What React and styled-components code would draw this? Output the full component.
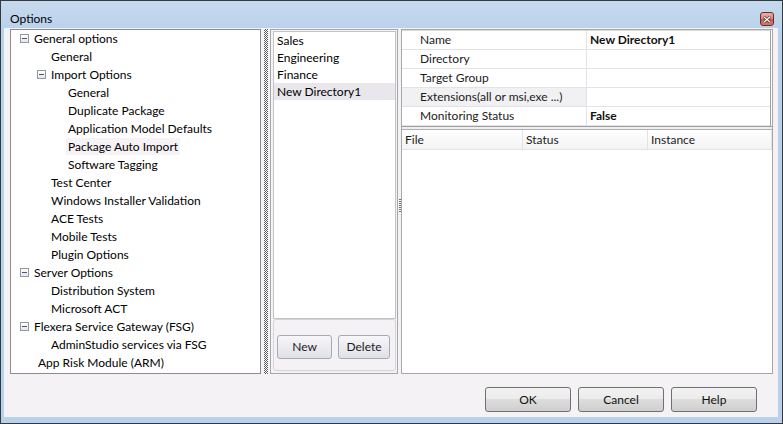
import React from 'react';
import styled, { createGlobalStyle } from 'styled-components';

const GlobalStyle = createGlobalStyle`
  body {
    margin: 0;
    font-family: Lato, "Open Sans", sans-serif;
    font-size: 12px;
    color: #1b1b1b;
  }
  * { box-sizing: border-box; }
`;

const tree = [
  { label: 'General options', indent: 20, open: true },
  { label: 'General', indent: 51 },
  { label: 'Import Options', indent: 37, open: true },
  { label: 'General', indent: 68 },
  { label: 'Duplicate Package', indent: 68 },
  { label: 'Application Model Defaults', indent: 68 },
  { label: 'Package Auto Import', indent: 68, hover: true },
  { label: 'Software Tagging', indent: 68 },
  { label: 'Test Center', indent: 51 },
  { label: 'Windows Installer Validation', indent: 51 },
  { label: 'ACE Tests', indent: 51 },
  { label: 'Mobile Tests', indent: 51 },
  { label: 'Plugin Options', indent: 51 },
  { label: 'Server Options', indent: 20, open: true },
  { label: 'Distribution System', indent: 51 },
  { label: 'Microsoft ACT', indent: 51 },
  { label: 'Flexera Service Gateway (FSG)', indent: 20, open: true },
  { label: 'AdminStudio services via FSG', indent: 51 },
  { label: 'App Risk Module (ARM)', indent: 38 },
];

const directories = ['Sales', 'Engineering', 'Finance', 'New Directory1'];

const properties = [
  { name: 'Name', value: 'New Directory1' },
  { name: 'Directory', value: '' },
  { name: 'Target Group', value: '' },
  { name: 'Extensions(all or msi,exe ...)', value: '', shaded: true },
  { name: 'Monitoring Status', value: 'False' },
];

function App() {
  return (
    <>
      <GlobalStyle />
      <Window>
        <TitleBar>
          <Title>Options</Title>
          <CloseButton aria-label="Close">
            <svg width="8" height="7" viewBox="0 0 8 7">
              <path d="M1 1 L7 6 M7 1 L1 6" stroke="#3a2020" strokeWidth="2.6" strokeLinecap="square" />
              <path d="M1 1 L7 6 M7 1 L1 6" stroke="#fff" strokeWidth="1.3" strokeLinecap="square" />
            </svg>
          </CloseButton>
        </TitleBar>
        <Client>
          <Panes>
            <TreePane>
              {tree.map((n, i) => (
                <TreeRow key={i} $indent={n.indent}>
                  {n.open && <Expander />}
                  <TreeLabel $hover={n.hover}>{n.label}</TreeLabel>
                </TreeRow>
              ))}
            </TreePane>
            <Splitter />
            <MiddlePane>
              <DirList>
                {directories.map((d, i) => (
                  <DirRow key={d} $selected={i === directories.length - 1}>{d}</DirRow>
                ))}
              </DirList>
              <ButtonGroup>
                <SmallButton $w={55}>New</SmallButton>
                <SmallButton $w={52}>Delete</SmallButton>
              </ButtonGroup>
            </MiddlePane>
            <Grip><GripDots /></Grip>
            <RightPane>
              <PropGrid>
                {properties.map((p) => (
                  <PropRow key={p.name}>
                    <PropName $shaded={p.shaded}>{p.name}</PropName>
                    <PropValue>{p.value}</PropValue>
                  </PropRow>
                ))}
              </PropGrid>
              <HSplit />
              <FileList>
                <FileHeader>
                  <HeaderCell $w={121}>File</HeaderCell>
                  <HeaderCell $w={125}>Status</HeaderCell>
                  <HeaderCell>Instance</HeaderCell>
                </FileHeader>
              </FileList>
            </RightPane>
          </Panes>
          <Footer>
            <DialogButton>OK</DialogButton>
            <DialogButton>Cancel</DialogButton>
            <DialogButton>Help</DialogButton>
          </Footer>
        </Client>
      </Window>
    </>
  );
}

export default App;

const Window = styled.div`
  width: 783px;
  height: 424px;
  border: 1px solid #34393f;
  background: linear-gradient(#c6daee, #b9d1ea 30px, #b9d1ea);
  display: flex;
  flex-direction: column;
`;

const TitleBar = styled.div`
  height: 27px;
  padding: 9px 8px 0 9px;
  display: flex;
  align-items: center;
  justify-content: space-between;
`;

const Title = styled.span`
  font-size: 12px;
  color: #000;
  margin-top: -2px;
`;

const CloseButton = styled.button`
  width: 14px;
  height: 14px;
  padding: 0;
  border: 1px solid #6a2e2a;
  border-radius: 3px;
  background: linear-gradient(#eab0a6, #d98476 50%, #c75b4c 50%, #d07a6a);
  display: flex;
  align-items: center;
  justify-content: center;
`;

const Client = styled.div`
  flex: 1;
  margin: 0 4px 6px 3px;
  padding: 1px 5px 0 6px;
  background: #f5f2f5;
  display: flex;
  flex-direction: column;
`;

const Panes = styled.div`
  height: 345px;
  display: flex;
`;

const TreePane = styled.div`
  width: 251px;
  border: 1px solid #8a8c90;
  background: #fff;
`;

const TreeRow = styled.div`
  height: 18px;
  display: flex;
  align-items: center;
  padding-left: ${(p) => p.$indent - 11}px;
  padding-bottom: 2px;
  white-space: nowrap;
`;

const Expander = styled.span`
  position: relative;
  width: 9px;
  height: 9px;
  margin-right: 5px;
  border: 1px solid #97989c;
  background: linear-gradient(#ffffff, #e6e6e6);
  &::after {
    content: '';
    position: absolute;
    left: 1px;
    top: 3px;
    width: 5px;
    height: 1px;
    background: #3a5a84;
  }
`;

const TreeLabel = styled.span`
  color: #000;
  padding: 0 2px;
  margin-left: -2px;
  background: ${(p) => (p.$hover ? '#f6f2f5' : 'transparent')};
  line-height: 17px;
`;

const Splitter = styled.div`
  width: 9px;
  padding: 0 2px 0 3px;
  &::before {
    content: '';
    display: block;
    width: 4px;
    height: 100%;
    background: repeating-conic-gradient(#5a5a5a 0 25%, #ffffff 0 50%) 0 0 / 2px 2px;
  }
`;

const MiddlePane = styled.div`
  width: 128px;
  border: 1px solid #a7a7a9;
  padding: 1px 1px 2px 2px;
  display: flex;
  flex-direction: column;
`;

const DirList = styled.div`
  height: 288px;
  border: 1px solid #c4c2c6;
  background: #fff;
`;

const DirRow = styled.div`
  height: 17px;
  line-height: 17px;
  padding-left: 3px;
  color: #000;
  background: ${(p) => (p.$selected ? '#e9e7eb' : 'transparent')};
`;

const ButtonGroup = styled.div`
  height: 52px;
  border: 1px solid #d6d3d8;
  border-radius: 3px;
  display: flex;
  align-items: center;
  gap: 6px;
  padding: 3px 0 0 3px;
`;

const SmallButton = styled.button`
  width: ${(p) => p.$w}px;
  height: 24px;
  border: 1px solid #a9a9b6;
  border-radius: 3px;
  background: linear-gradient(#f7f7fa, #ebebf0 50%, #e0e0e8);
  font-family: Lato, "Open Sans", sans-serif;
  font-size: 12px;
  color: #1b1b1b;
  padding: 0;
`;

const Grip = styled.div`
  width: 3px;
  display: flex;
  align-items: center;
  justify-content: center;
`;

const GripDots = styled.div`
  width: 2px;
  height: 14px;
  margin-top: 8px;
  background: repeating-linear-gradient(#6a6a6a 0 1px, #ffffff 1px 2px);
`;

const RightPane = styled.div`
  width: 372px;
  border: 1px solid #a7a7a9;
  background: #fff;
  display: flex;
  flex-direction: column;
`;

const PropGrid = styled.div`
  border-top: 1px solid #d8d8d8;
  border-right: 1px solid #a0a0a4;
  margin-right: 1px;
`;

const PropRow = styled.div`
  height: 19px;
  display: flex;
  border-bottom: 1px solid #e3e2e4;
`;

const PropName = styled.div`
  width: 185px;
  padding-left: 18px;
  line-height: 18px;
  border-right: 1px solid #e3e2e4;
  background: ${(p) => (p.$shaded ? '#f1f0f2' : '#fff')};
  color: #1b1b1b;
  white-space: nowrap;
`;

const PropValue = styled.div`
  flex: 1;
  padding-left: 3px;
  line-height: 18px;
  font-weight: 700;
  color: #111;
`;

const HSplit = styled.div`
  height: 4px;
  background: #efedf0;
  border-top: 1px solid #a0a0a4;
  border-bottom: 1px solid #b0b0b4;
`;

const FileList = styled.div`
  flex: 1;
  background: #fff;
`;

const FileHeader = styled.div`
  height: 20px;
  display: flex;
  background: linear-gradient(#ffffff, #f3f3f5);
  border-bottom: 1px solid #e2e2e4;
`;

const HeaderCell = styled.div`
  ${(p) => (p.$w ? `width: ${p.$w}px;` : 'flex: 1;')}
  padding-left: 3px;
  line-height: 19px;
  border-right: 1px solid #e2e2e4;
  color: #1b1b1b;
`;

const Footer = styled.div`
  display: flex;
  justify-content: flex-end;
  gap: 7px;
  padding: 13px 16px 0 0;
`;

const DialogButton = styled.button`
  width: 86px;
  height: 25px;
  border: 1px solid #707070;
  border-radius: 3px;
  background: linear-gradient(#f2f2f2, #ebebeb 50%, #dddddd 50%, #cfcfcf);
  font-family: Lato, "Open Sans", sans-serif;
  font-size: 12px;
  color: #111;
  padding: 0;
`;
